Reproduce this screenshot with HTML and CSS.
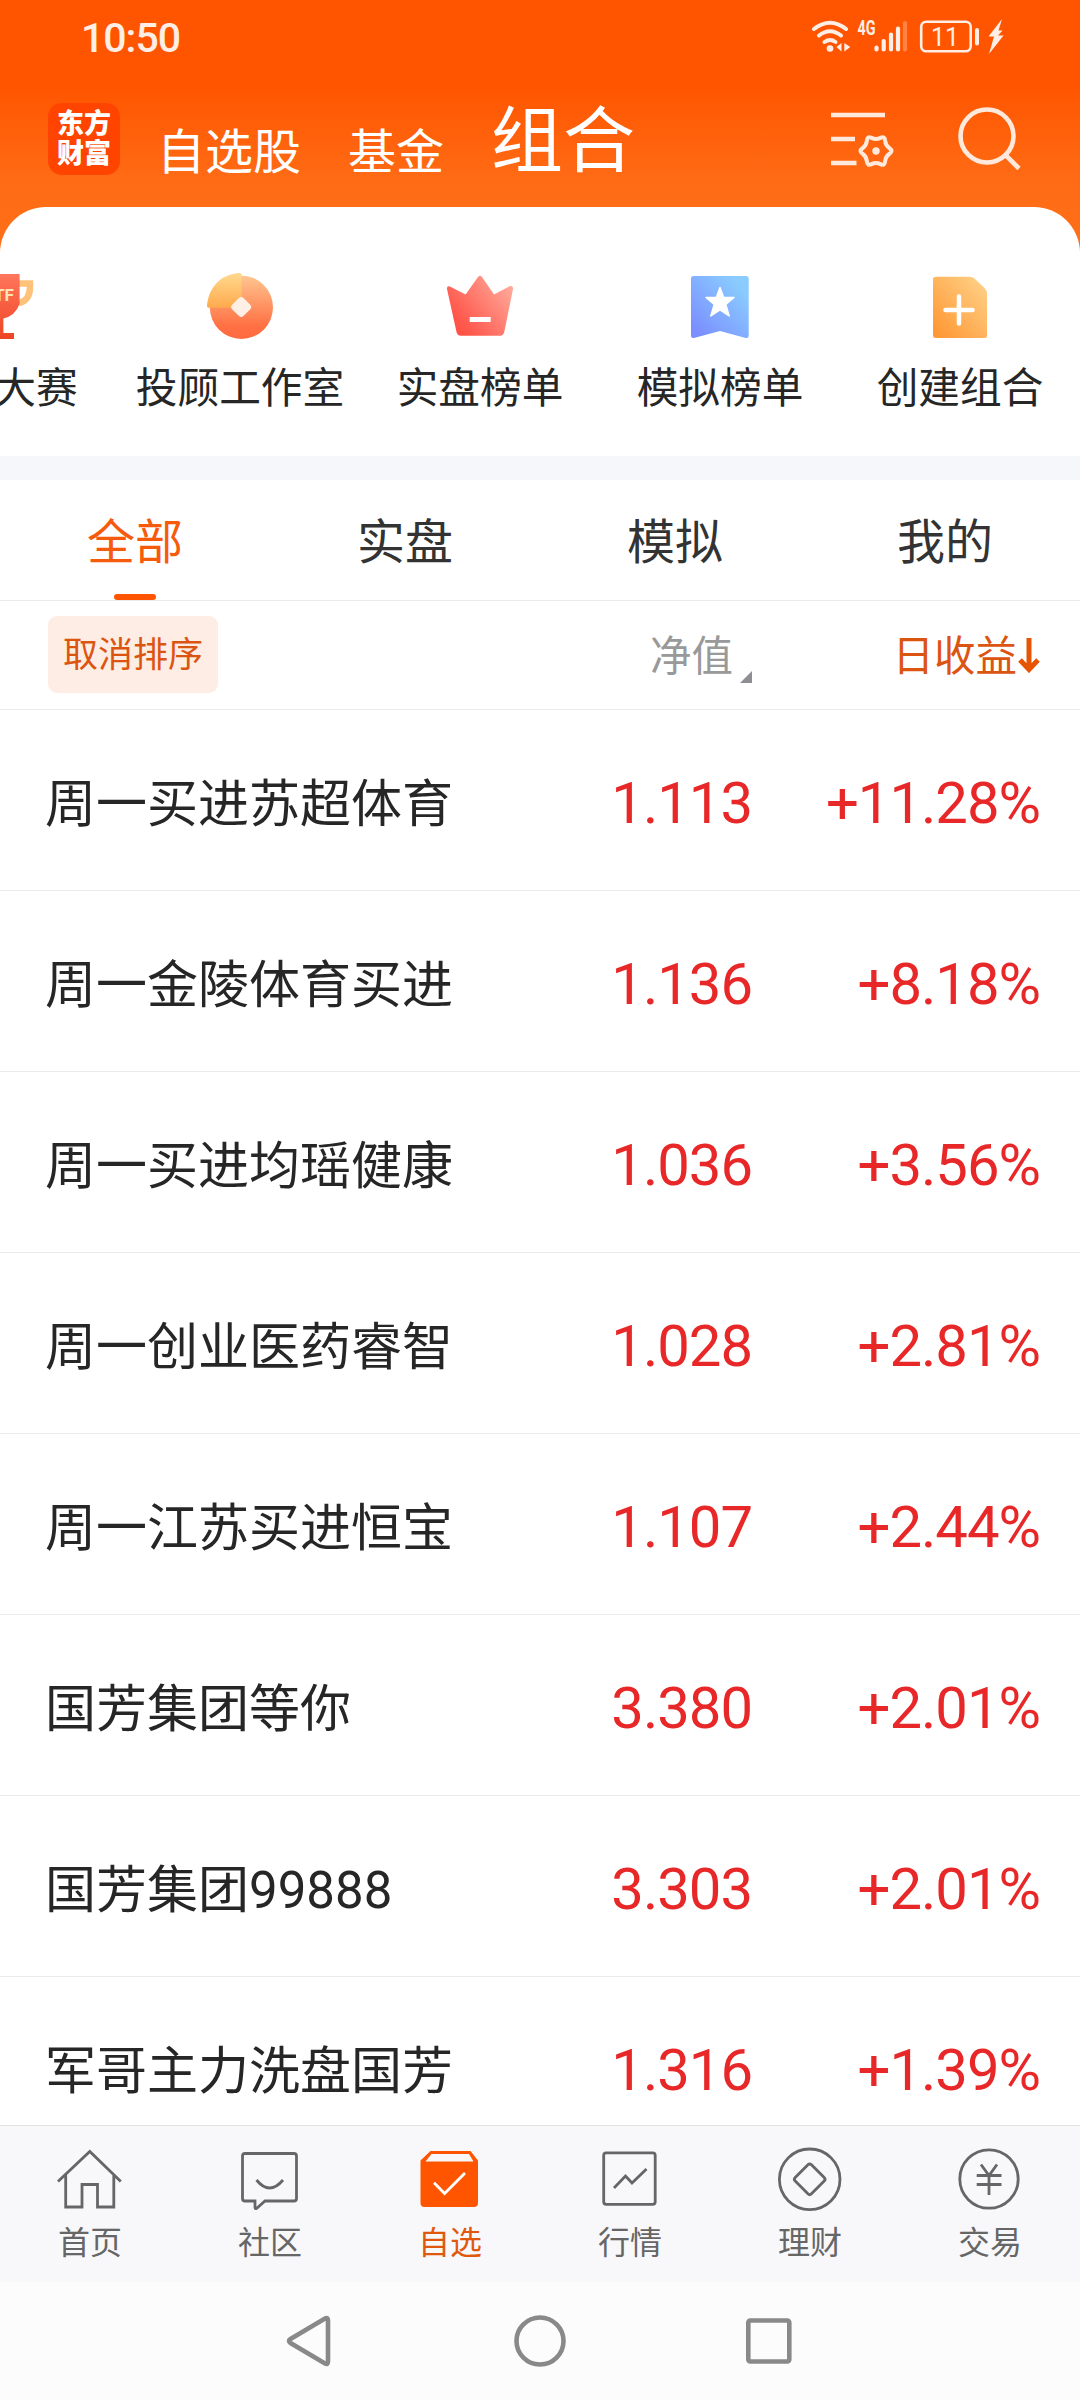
FILE: index.html
```html
<!DOCTYPE html>
<html lang="zh-CN">
<head>
  <meta charset="UTF-8">
  <meta name="viewport" content="width=device-width, initial-scale=1.0">
  <title>组合</title>
  <link rel="stylesheet" href="styles.css">
</head>
<body>
  <header>
    <div class="status-bar">
      <span class="clock">10:50</span>
      <svg class="status-icons" width="200" height="40" viewBox="808 16 200 40">
        <!-- wifi -->
        <g fill="none" stroke="#ffeee5" stroke-width="4" stroke-linecap="round">
          <path d="M814 29Q830 16.500 846 29"/>
          <path d="M819 35.500Q830 27 841 35.500"/>
          <path d="M824.500 42Q830 38 835.500 42"/>
        </g>
        <circle cx="830" cy="48.500" r="3.300" fill="#ffeee5"/>
        <path d="M841.500 43v8.500l-5-4.500zM844.300 43l6 4-6 4.500z" fill="#ffeee5"/>
        <!-- signal -->
        <text class="net" x="857.500" y="35" textLength="18" lengthAdjust="spacingAndGlyphs">4G</text>
        <g stroke="#ffeee5" stroke-width="4.200" stroke-linecap="round">
          <path d="M876.500 47.500v2M883.700 41v8.500M891 34.500v15M898 28.500v21"/>
          <path d="M905 23v26.500" opacity=".3"/>
        </g>
        <!-- battery -->
        <rect x="921.200" y="21.700" width="49.500" height="29.600" rx="5" fill="none" stroke="#ffeee5" stroke-width="2.600"/>
        <rect x="975" y="28" width="4" height="17.500" rx="2" fill="#ffeee5"/>
        <text class="level" x="945" y="46">11</text>
        <path d="M1002 19l-13.500 17.500h5.500l-5 17.500 14.500-18.500h-5.500l4.500-5h-4z" fill="#ffeee5"/>
      </svg>
    </div>
    <nav class="top-nav">
      <div class="logo"><span>东方</span><span>财富</span></div>
      <a class="nav-item" href="#">自选股</a>
      <a class="nav-item" href="#">基金</a>
      <a class="nav-item current" href="#">组合</a>
      <div class="nav-tools">
        <svg width="64" height="64" viewBox="0 0 64 64" fill="none" stroke="#ffe9dc" stroke-width="4.600">
          <path d="M3 11h54M3 35h24M3 59h25.500"/>
          <g transform="translate(48 47)">
            <path stroke-width="4" d="M13.500-2.750Q17.500 0 13.500 2.750 9.500 5.500 9.100 10.350 8.750 15.200 4.400 13.100 0 11-4.400 13.100-8.750 15.200-9.100 10.350-9.500 5.500-13.500 2.750-17.500 0-13.500-2.750-9.500-5.500-9.100-10.350-8.750-15.200-4.400-13.100 0-11 4.400-13.100 8.750-15.200 9.100-10.350 9.500-5.500 13.500-2.750z"/>
            <circle r="3.700" fill="#ffe9dc" stroke="none"/>
          </g>
        </svg>
        <svg width="64" height="64" viewBox="0 0 64 64" fill="none" stroke="#ffe9dc" stroke-width="4.600">
          <circle cx="30" cy="32" r="26.500"/>
          <path d="M48.500 51l13.500 13.500"/>
        </svg>
      </div>
    </nav>
  </header>

  <main>
    <section class="shortcuts">
      <a class="shortcut" href="#">
        <svg width="72" height="72" viewBox="0 0 72 72">
          <defs>
            <linearGradient id="cup" x1="0" y1="0" x2="0" y2="1"><stop offset="0" stop-color="#ff765c"/><stop offset="1" stop-color="#ee4524"/></linearGradient>
            <linearGradient id="gold" x1="0" y1="0" x2="0" y2="1"><stop offset="0" stop-color="#ffd98e"/><stop offset="1" stop-color="#ffaa4d"/></linearGradient>
          </defs>
          <path d="M55 13.500h11q1 17-11 19.500M17 13.500H6q-1 17 11 19.500" fill="none" stroke="#ffc27a" stroke-width="6.500"/>
          <path d="M16 4h39.600v30q-4.500 12-16.200 14.500V63H50v6H22v-6h10.600V48.500Q20 46 16 34z" fill="url(#cup)"/>
          <text class="etf" x="35" y="30.500">ETF</text>
        </svg>
        <span>ETF大赛</span>
      </a>
      <a class="shortcut" href="#">
        <svg width="72" height="72" viewBox="0 0 72 72">
          <defs><linearGradient id="coin" x1="0" y1="0" x2="0" y2="1"><stop offset="0" stop-color="#ffc590"/><stop offset=".8" stop-color="#ff7043"/><stop offset="1" stop-color="#ff6a40"/></linearGradient></defs>
          <circle cx="37.400" cy="37.300" r="31.600" fill="url(#coin)"/>
          <path d="M37.700 4.500V37.700H4.500q-1.500 0-1.500-2C4.500 17 17 4 35.700 3q2 0 2 1.500z" fill="url(#gold)"/>
          <rect x="29.200" y="29" width="16" height="16" rx="3.500" transform="rotate(45 37.200 37)" fill="#fff0e6"/>
        </svg>
        <span>投顾工作室</span>
      </a>
      <a class="shortcut" href="#">
        <svg width="72" height="72" viewBox="0 0 72 72">
          <defs><linearGradient id="crown" x1="0" y1=".9" x2="1" y2=".2"><stop offset="0" stop-color="#ff4a3d"/><stop offset=".25" stop-color="#ff5c50"/><stop offset="1" stop-color="#ffaa9b"/></linearGradient></defs>
          <path d="M6 16.500L21.600 24.500 34 7q2-2.500 4 0L50 24.500 66 16q3.500-.5 3 3l-8.700 43q-.8 3.700-4.300 3.700H17q-3.700 0-4.500-3.700L3 19q-.5-3.500 3-2.500z" fill="url(#crown)"/>
          <path d="M25.700 49.500h21" stroke="#fff" stroke-width="5"/>
        </svg>
        <span>实盘榜单</span>
      </a>
      <a class="shortcut" href="#">
        <svg width="72" height="72" viewBox="0 0 72 72">
          <defs><linearGradient id="mark" x1="0" y1="1" x2="1" y2="0"><stop offset=".1" stop-color="#7b8fff"/><stop offset=".85" stop-color="#8accff"/></linearGradient></defs>
          <path d="M10 6h52q2.700 0 2.700 2.700v57q0 2.800-3 2.200L36 61 10 67.900q-3 .6-3-2.200v-57Q7 6 10 6z" fill="url(#mark)"/>
          <path d="M36 17.500l3.700 10h10.300l-8.200 7 3.400 11.500L36 39.800 26.800 46l3.400-11.500-8.200-7h10.300z" fill="#fff" stroke="#fff" stroke-width="1.500" stroke-linejoin="round"/>
        </svg>
        <span>模拟榜单</span>
      </a>
      <a class="shortcut" href="#">
        <svg width="72" height="72" viewBox="0 0 72 72">
          <defs><linearGradient id="doc" x1="0" y1="1" x2="1" y2="0"><stop offset=".1" stop-color="#ff9a38"/><stop offset=".9" stop-color="#ffce83"/></linearGradient></defs>
          <path d="M12 6.700h33q3.500 0 6 2.300l9.500 9q2.500 2.500 2.500 5.500v42q0 2.500-2.500 2.500H12q-3 0-3-2.500v-56q0-2.800 3-2.800z" fill="url(#doc)"/>
          <path d="M35 26.500v27M21.500 40h27" stroke="#fff" stroke-width="4.500" stroke-linecap="round"/>
        </svg>
        <span>创建组合</span>
      </a>
    </section>

    <div class="tabs">
      <a class="tab active" href="#">全部</a>
      <a class="tab" href="#">实盘</a>
      <a class="tab" href="#">模拟</a>
      <a class="tab" href="#">我的</a>
    </div>

    <div class="sort-bar">
      <div><button class="cancel-sort">取消排序</button></div>
      <div class="sort-value">净值<i class="corner"></i></div>
      <div class="sort-income">日收益<svg width="23" height="36" viewBox="0 0 23 36" fill="none" stroke="#e85406" stroke-width="5"><path d="M12 1v31M3 23l9 9.500 9-9.500"/></svg></div>
    </div>

    <div class="list">
      <div class="row"><span class="name">周一买进苏超体育</span><span class="num">1.113</span><span class="num">+11.28%</span></div>
      <div class="row"><span class="name">周一金陵体育买进</span><span class="num">1.136</span><span class="num">+8.18%</span></div>
      <div class="row"><span class="name">周一买进均瑶健康</span><span class="num">1.036</span><span class="num">+3.56%</span></div>
      <div class="row"><span class="name">周一创业医药睿智</span><span class="num">1.028</span><span class="num">+2.81%</span></div>
      <div class="row"><span class="name">周一江苏买进恒宝</span><span class="num">1.107</span><span class="num">+2.44%</span></div>
      <div class="row"><span class="name">国芳集团等你</span><span class="num">3.380</span><span class="num">+2.01%</span></div>
      <div class="row"><span class="name">国芳集团99888</span><span class="num">3.303</span><span class="num">+2.01%</span></div>
      <div class="row"><span class="name">军哥主力洗盘国芳</span><span class="num">1.316</span><span class="num">+1.39%</span></div>
    </div>
  </main>

  <footer class="tab-bar">
    <a class="bar-item" href="#">
      <svg width="72" height="72" viewBox="0 0 72 72"><path d="M4 38.500L35.800 8.500l31 30M11.700 32v32H28V41.500h15.500V64h16.300V32"/></svg>
      <span>首页</span>
    </a>
    <a class="bar-item" href="#">
      <svg width="72" height="72" viewBox="0 0 72 72"><path d="M11 10.500h49q2.500 0 2.500 2.500v42.500q0 2.500-2.500 2.500H31l-8.500 7.500q-1.500.5-1.500-1V58H11q-2.500 0-2.500-2.500V13q0-2.500 2.500-2.500zM22.500 37q13 16 26.500 0"/></svg>
      <span>社区</span>
    </a>
    <a class="bar-item on" href="#">
      <svg width="72" height="72" viewBox="0 0 72 72">
        <path d="M16.500 8h40l7.500 9.500V60q0 4-4 4H10.500q-4 0-4-4V17.500z" fill="#ff5500" stroke="none"/>
        <path d="M17.500 11h37.500l4.500 7.500h-48z" fill="#f8f8fb" stroke="none"/>
        <path d="M20 39.700L30.600 50.500 51 30" stroke="#fff"/>
      </svg>
      <span>自选</span>
    </a>
    <a class="bar-item" href="#">
      <svg width="72" height="72" viewBox="0 0 72 72"><rect x="9.700" y="9.800" width="51.500" height="51.500" rx="2.500"/><path d="M20 45l11.500-12 6.500 7 14.500-14"/></svg>
      <span>行情</span>
    </a>
    <a class="bar-item" href="#">
      <svg width="72" height="72" viewBox="0 0 72 72"><circle cx="35.700" cy="36.300" r="30.300"/><rect x="24.200" y="24.800" width="23" height="23" rx="2.500" transform="rotate(45 35.700 36.300)"/></svg>
      <span>理财</span>
    </a>
    <a class="bar-item" href="#">
      <svg width="72" height="72" viewBox="0 0 72 72"><circle cx="35" cy="36" r="29.200"/><path d="M27 21.500l8 11 8-11M22.700 32.500h24.800M22.700 41.500h24.800M35 32v20"/></svg>
      <span>交易</span>
    </a>
  </footer>

  <div class="system-nav">
    <svg width="50" height="54" viewBox="0 0 50 54"><path d="M39 4.500q3-1.500 3 2v41q0 3.500-3 2L4.500 29q-3-2 0-4z"/></svg>
    <svg width="54" height="54" viewBox="0 0 54 54"><circle cx="27" cy="27" r="23.500"/></svg>
    <svg width="50" height="54" viewBox="0 0 50 54"><rect x="4.300" y="6.500" width="41" height="41" rx="2"/></svg>
  </div>
</body>
</html>
```
FILE: styles.css
```css
/* Base Reset */
* { margin: 0; padding: 0; box-sizing: border-box; }
body {
  width: 1080px;
  height: 2400px;
  overflow: hidden;
  display: flex;
  flex-direction: column;
  background: #fff linear-gradient(#ff5500 0, #ff5500 85px, #ff6b15 180px, #ff7019 260px) no-repeat 0 0 / 100% 260px;
  color: #262626;
  font-family: Roboto, "Noto Sans CJK SC", sans-serif;
}
a { text-decoration: none; color: inherit; }
svg { display: block; flex: none; }

/* Header */
header { height: 207px; flex: none; }
.status-bar {
  height: 76px;
  padding: 0 72px 0 81px;
  display: flex;
  align-items: center;
  justify-content: space-between;
}
.clock {
  font-size: 41px;
  font-weight: 500;
  line-height: 76px;
  letter-spacing: -1px;
  color: #ffeee5;
}
.status-icons { margin-bottom: 4px; }
.status-icons text { fill: #ffeee5; }
.net { font-size: 20px; font-weight: 700; }
.level { font-size: 25px; text-anchor: middle; }
.top-nav {
  height: 131px;
  padding: 0 56px 0 48px;
  display: flex;
  align-items: flex-start;
  color: #fff;
}
.logo {
  width: 72px;
  height: 72px;
  margin: 27px 37px 0 0;
  padding-top: 6px;
  border-radius: 14px;
  background: #ff4400;
  display: flex;
  flex-direction: column;
  align-items: center;
}
.logo span {
  font-size: 27px;
  font-weight: 900;
  line-height: 30px;
}
.nav-item {
  font-size: 48px;
  line-height: 72px;
  margin: 41px 47px 0 0;
}
.nav-item.current {
  font-size: 72px;
  margin: 30px 0 0;
}
.nav-tools {
  display: flex;
  gap: 65px;
  margin: 28px 3px 0 auto;
}
.nav-tools svg { overflow: visible; }

/* Shortcuts, scrolled so the first one is half off screen */
main {
  flex: 1;
  min-height: 0;
  display: flex;
  flex-direction: column;
  background: #fff;
  border-radius: 46px 46px 0 0;
  overflow: hidden;
}
.shortcuts {
  height: 273px;
  flex: none;
  display: flex;
  margin-left: -120px;
  padding-top: 63px;
  border-bottom: 24px solid #f6f7fa;
}
.shortcut {
  flex: 0 0 240px;
  display: flex;
  flex-direction: column;
  align-items: center;
  font-size: 41.7px;
  line-height: 60px;
  gap: 17px;
  white-space: nowrap;
}
.etf { font-size: 17px; font-weight: 700; fill: #ffe3b5; text-anchor: middle; }

/* Tabs */
.tabs {
  height: 121px;
  flex: none;
  display: flex;
  border-bottom: 1px solid #ebebeb;
}
.tab {
  flex: 1;
  display: flex;
  flex-direction: column;
  align-items: center;
  font-size: 48px;
  line-height: 114px;
  padding-top: 6px;
  height: 120px;
  color: #333;
}
.tab.active {
  color: #f65a0c;
}
.tab.active::after {
  content: "";
  width: 42px;
  height: 6px;
  margin-top: -6px;
  border-radius: 3px;
  background: #ff5500;
}

/* Sort bar and list share the same columns */
.sort-bar, .row {
  display: grid;
  grid-template-columns: 420px 1fr 288px;
  align-items: center;
  padding: 0 40px 0 45px;
  border-bottom: 1px solid #ebebeb;
  flex: none;
}
.sort-bar {
  height: 109px;
  padding-left: 48px;
  grid-template-columns: 417px 1fr 288px;
  font-size: 41.5px;
  line-height: 60px;
}
.cancel-sort {
  display: block;
  width: 170px;
  height: 77px;
  margin-bottom: 1px;
  padding-top: 2px;
  border: none;
  border-radius: 9px;
  background: #fdede4;
  color: #dc5510;
  font-family: inherit;
  font-size: 35px;
  line-height: 75px;
}
.sort-value, .sort-income {
  display: flex;
  justify-content: flex-end;
  align-items: center;
  padding-top: 4px;
}
.sort-value { color: #999; }
.corner {
  width: 12px;
  height: 12px;
  margin: 40px 0 0 7px;
  background: #8e8e93;
  clip-path: polygon(100% 0, 100% 100%, 0 100%);
}
.sort-income { color: #dc5510; }
.sort-income svg { margin-bottom: 4px; }
.list { flex: 1; overflow: hidden; }
.row { height: 181px; }
.name { font-size: 51px; white-space: nowrap; }
.num {
  padding-top: 5px;
  font-size: 58px;
  letter-spacing: -1px;
  text-align: right;
  color: #e82828;
}

/* Bottom bar */
.tab-bar {
  height: 157px;
  flex: none;
  display: flex;
  background: #f8f8fb;
  border-top: 1px solid #e2e2e2;
  padding-top: 17px;
}
.bar-item {
  flex: 1;
  display: flex;
  flex-direction: column;
  align-items: center;
  gap: 4px;
  font-size: 32px;
  line-height: 48px;
  color: #666;
}
.bar-item svg { fill: none; stroke: #666; stroke-width: 2.8; }
.bar-item.on { color: #e0580e; }
.system-nav {
  height: 118px;
  flex: none;
  display: flex;
  justify-content: center;
  align-items: center;
  gap: 177px;
  background: #fcfcfc;
}
.system-nav svg { fill: none; stroke: #898989; stroke-width: 4.6; }
```
